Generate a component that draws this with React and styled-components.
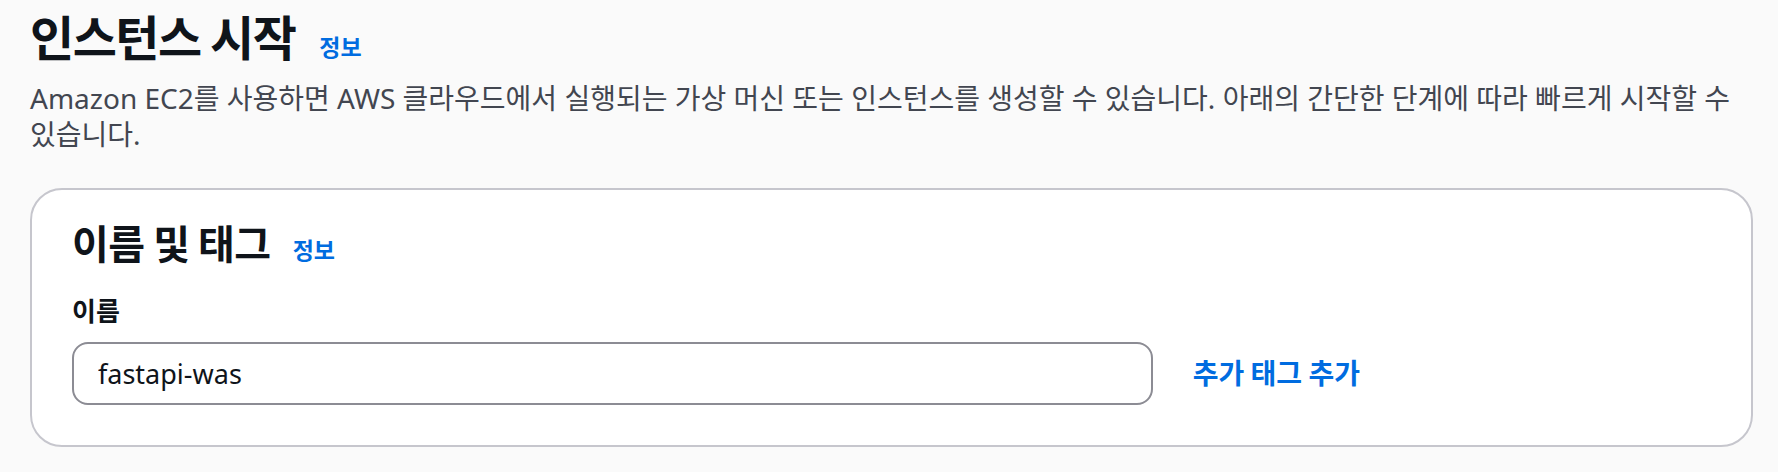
import React from "react";
import styled, { createGlobalStyle } from "styled-components";

const GlobalStyle = createGlobalStyle`
  html, body {
    margin: 0;
    padding: 0;
    background: #fafafa;
  }
  body {
    font-family: "Noto Sans", "Noto Sans CJK KR", sans-serif;
    color: #0f141a;
  }
`;

const Page = styled.div`
  padding: 0 25px 0 30px;
`;

const HeaderRow = styled.div`
  display: flex;
  align-items: baseline;
  gap: 24px;
  height: 70px;
`;

const Title = styled.h1`
  margin: 0;
  font-family: "Noto Sans CJK KR", sans-serif;
  font-size: 48px;
  line-height: 70px;
  font-weight: 700;
  letter-spacing: -1.5px;
  color: #0f141a;
`;

const InfoLink = styled.a`
  font-family: "Noto Sans CJK KR", sans-serif;
  font-size: 23px;
  font-weight: 700;
  color: #006ce0;
  text-decoration: none;
  cursor: pointer;
`;

const Description = styled.p`
  margin: 10px 0 0;
  font-size: 28px;
  line-height: 36px;
  color: #424650;
`;

const Card = styled.section`
  margin-top: 36px;
  background: #ffffff;
  border: 2px solid #c6c6cd;
  border-radius: 32px;
  padding: 24px 38px 40px 40px;
`;

const CardHeaderRow = styled.div`
  display: flex;
  align-items: baseline;
  gap: 22px;
`;

const CardTitle = styled.h2`
  margin: 0;
  font-family: "Noto Sans CJK KR", sans-serif;
  font-size: 40px;
  line-height: 56px;
  font-weight: 700;
  letter-spacing: -0.5px;
  color: #0f141a;
`;

const Label = styled.label`
  display: block;
  margin-top: 22px;
  font-family: "Noto Sans CJK KR", sans-serif;
  font-size: 26px;
  line-height: 36px;
  font-weight: 700;
  color: #0f141a;
`;

const FieldGrid = styled.div`
  display: grid;
  grid-template-columns: repeat(12, 1fr);
  column-gap: 40px;
  align-items: center;
  margin-top: 14px;
`;

const Input = styled.input`
  grid-column: span 8;
  box-sizing: border-box;
  height: 63px;
  width: 100%;
  border: 2px solid #8c8c94;
  border-radius: 16px;
  padding: 0 24px;
  font-family: "Noto Sans", sans-serif;
  font-size: 27px;
  color: #0f141a;
  background: #ffffff;
  outline: none;
`;

const TagLink = styled.a`
  grid-column: span 4;
  font-family: "Noto Sans CJK KR", sans-serif;
  font-size: 28px;
  font-weight: 700;
  color: #006ce0;
  text-decoration: none;
  cursor: pointer;
  padding-bottom: 4px;
`;

export default function App() {
  return (
    <>
      <GlobalStyle />
      <Page>
        <HeaderRow>
          <Title>인스턴스 시작</Title>
          <InfoLink>정보</InfoLink>
        </HeaderRow>
        <Description>
          Amazon EC2를 사용하면 AWS 클라우드에서 실행되는 가상 머신 또는 인스턴스를 생성할 수 있습니다. 아래의 간단한 단계에 따라 빠르게 시작할 수 있습니다.
        </Description>
        <Card>
          <CardHeaderRow>
            <CardTitle>이름 및 태그</CardTitle>
            <InfoLink>정보</InfoLink>
          </CardHeaderRow>
          <Label htmlFor="name">이름</Label>
          <FieldGrid>
            <Input id="name" defaultValue="fastapi-was" />
            <TagLink>추가 태그 추가</TagLink>
          </FieldGrid>
        </Card>
      </Page>
    </>
  );
}
